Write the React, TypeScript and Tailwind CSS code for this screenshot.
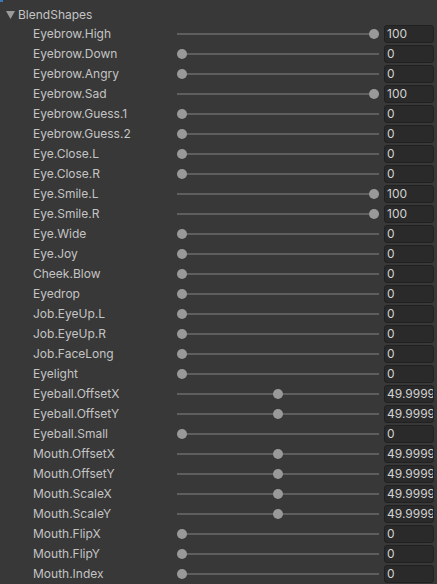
const shapes: [string, string][] = [
  ['Eyebrow.High', '100'],
  ['Eyebrow.Down', '0'],
  ['Eyebrow.Angry', '0'],
  ['Eyebrow.Sad', '100'],
  ['Eyebrow.Guess.1', '0'],
  ['Eyebrow.Guess.2', '0'],
  ['Eye.Close.L', '0'],
  ['Eye.Close.R', '0'],
  ['Eye.Smile.L', '100'],
  ['Eye.Smile.R', '100'],
  ['Eye.Wide', '0'],
  ['Eye.Joy', '0'],
  ['Cheek.Blow', '0'],
  ['Eyedrop', '0'],
  ['Job.EyeUp.L', '0'],
  ['Job.EyeUp.R', '0'],
  ['Job.FaceLong', '0'],
  ['Eyelight', '0'],
  ['Eyeball.OffsetX', '49.9999'],
  ['Eyeball.OffsetY', '49.9999'],
  ['Eyeball.Small', '0'],
  ['Mouth.OffsetX', '49.9999'],
  ['Mouth.OffsetY', '49.9999'],
  ['Mouth.ScaleX', '49.9999'],
  ['Mouth.ScaleY', '49.9999'],
  ['Mouth.FlipX', '0'],
  ['Mouth.FlipY', '0'],
  ['Mouth.Index', '0'],
]

function SliderRow({ label, value }: { label: string; value: string }) {
  const pct = parseFloat(value) / 100
  return (
    <div className="flex h-5 items-center">
      <div className="w-[177px] shrink-0 pl-[33px] text-[12px] leading-5 text-[#c4c4c4] whitespace-nowrap">
        {label}
      </div>
      <div className="relative h-5 w-[202px] shrink-0">
        {/* track */}
        <div className="absolute left-0 right-0 top-[9px] h-[2px] bg-[#5e5e5e]" />
        {/* thumb */}
        <div
          className="absolute top-[5px] h-[10px] w-[10px] rounded-full bg-[#999999]"
          style={{ left: `${pct * 192}px` }}
        />
      </div>
      <div className="ml-[5px] flex h-[18px] w-[50px] shrink-0 items-center overflow-hidden rounded-[3px] border border-[#212121] bg-[#2a2a2a] pl-[2px] text-[12px] text-[#d2d2d2] whitespace-nowrap">
        {value}
      </div>
    </div>
  )
}

export default function App() {
  return (
    <div className="relative h-[584px] w-[437px] overflow-hidden bg-[#383838] pt-[5px] font-['Inter','Noto_Sans',sans-serif]">
      <div className="absolute left-0 top-0 h-[2px] w-[3px] bg-[#3a79bb]" />
      {/* Header */}
      <div className="flex h-[19px] items-center pl-[6px] text-[12px] text-[#c4c4c4]">
        <svg width="9" height="8" viewBox="0 0 9 8" className="mr-[3px]">
          <path d="M0 0 L9 0 L4.5 8 Z" fill="#9a9a9a" />
        </svg>
        BlendShapes
      </div>
      {shapes.map(([label, value]) => (
        <SliderRow key={label} label={label} value={value} />
      ))}
    </div>
  )
}
